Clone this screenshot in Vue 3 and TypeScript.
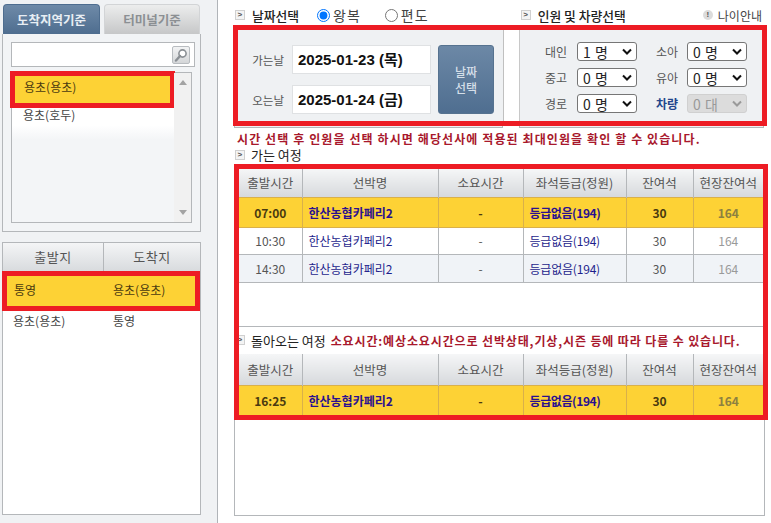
<script setup lang="ts">
interface Row { time: string; name: string; dur: string; grade: string; seat: string; site: string; sel?: boolean }
const columns = ['출발시간', '선박명', '소요시간', '좌석등급(정원)', '잔여석', '현장잔여석']
const outbound: Row[] = [
  { time: '07:00', name: '한산농협카페리2', dur: '-', grade: '등급없음(194)', seat: '30', site: '164', sel: true },
  { time: '10:30', name: '한산농협카페리2', dur: '-', grade: '등급없음(194)', seat: '30', site: '164' },
  { time: '14:30', name: '한산농협카페리2', dur: '-', grade: '등급없음(194)', seat: '30', site: '164' },
]
const inbound: Row[] = [
  { time: '16:25', name: '한산농협카페리2', dur: '-', grade: '등급없음(194)', seat: '30', site: '164', sel: true },
]
const tables = { outbound, inbound }
const counts = ['0 명', '1 명', '2 명', '3 명']
</script>

<template>
  <div class="page">
    <aside class="side">
      <div class="tabs">
        <div class="tab on">도착지역기준</div>
        <div class="tab">터미널기준</div>
      </div>
      <div class="panel">
        <div class="search">
          <span class="sbtn">
            <svg width="14" height="14" viewBox="0 0 14 14"><circle cx="8.5" cy="5.5" r="3.6" fill="#fff" stroke="#8a8f94" stroke-width="1.6"/><path d="M6 8 2 12.5" stroke="#8a8f94" stroke-width="2.4" stroke-linecap="round"/></svg>
          </span>
        </div>
        <div class="list">
          <div class="items">
            <div class="item sel">용초(용초)</div>
            <div class="item">용초(호두)</div>
          </div>
          <div class="track"><i class="up"></i><i class="down"></i></div>
        </div>
      </div>
      <div class="routes">
        <div class="rhead"><span>출발지</span><span>도착지</span></div>
        <div class="rrow rsel"><span>통영</span><span>용초(용초)</span></div>
        <div class="rrow"><span>용초(용초)</span><span>통영</span></div>
      </div>
    </aside>

    <main class="main">
      <div class="top">
        <span class="ico">&gt;</span><b class="ttl">날짜선택</b>
        <label class="rad r1"><input type="radio" name="trip" checked />왕복</label>
        <label class="rad r2"><input type="radio" name="trip" />편도</label>
        <span class="ico i2">&gt;</span><b class="ttl">인원 및 차량선택</b>
        <span class="age"><i>!</i>나이안내</span>
      </div>

      <div class="hl form">
        <div class="dates">
          <div class="dcol">
            <div class="dline"><label>가는날</label><div class="dbox">2025-01-23 (목)</div></div>
            <div class="dline"><label>오는날</label><div class="dbox">2025-01-24 (금)</div></div>
          </div>
          <button class="pick">날짜<br />선택</button>
        </div>
        <div class="people">
          <label>대인</label><select><option v-for="c in counts" :key="c" :selected="c === '1 명'">{{ c }}</option></select>
          <label>소아</label><select><option v-for="c in counts" :key="c">{{ c }}</option></select>
          <label>중고</label><select><option v-for="c in counts" :key="c">{{ c }}</option></select>
          <label>유아</label><select><option v-for="c in counts" :key="c">{{ c }}</option></select>
          <label>경로</label><select><option v-for="c in counts" :key="c">{{ c }}</option></select>
          <label class="car">차량</label><select disabled><option>0 대</option></select>
        </div>
      </div>
      <div class="under"><span></span><span></span></div>

      <p class="msg">시간 선택 후 인원을 선택 하시면 해당선사에 적용된 최대인원을 확인 할 수 있습니다.</p>
      <div class="sub go"><span class="ico">&gt;</span><span>가는 여정</span></div>

      <div class="hl trips">
        <table>
          <colgroup><col class="c1" /><col class="c2" /><col class="c3" /><col class="c4" /><col class="c5" /><col class="c6" /></colgroup>
          <thead><tr><th v-for="c in columns" :key="c">{{ c }}</th></tr></thead>
          <tbody>
            <tr v-for="r in tables.outbound" :key="r.time" :class="{ sel: r.sel }">
              <td>{{ r.time }}</td><td class="nm">{{ r.name }}</td><td>{{ r.dur }}</td><td class="nm gr">{{ r.grade }}</td><td>{{ r.seat }}</td><td class="site">{{ r.site }}</td>
            </tr>
          </tbody>
        </table>
        <div class="blank"></div>
        <div class="sub back"><span class="ico">&gt;</span><span>돌아오는 여정</span><b>소요시간:예상소요시간으로 선박상태,기상,시즌 등에 따라 다를 수 있습니다.</b></div>
        <table class="t2">
          <colgroup><col class="c1" /><col class="c2" /><col class="c3" /><col class="c4" /><col class="c5" /><col class="c6" /></colgroup>
          <thead><tr><th v-for="c in columns" :key="c">{{ c }}</th></tr></thead>
          <tbody>
            <tr v-for="r in tables.inbound" :key="r.time" :class="{ sel: r.sel }">
              <td>{{ r.time }}</td><td class="nm">{{ r.name }}</td><td>{{ r.dur }}</td><td class="nm gr">{{ r.grade }}</td><td>{{ r.seat }}</td><td class="site">{{ r.site }}</td>
            </tr>
          </tbody>
        </table>
      </div>
      <div class="rest"></div>
    </main>
  </div>
</template>

<style>
html, body { margin: 0; background: #fff; }
</style>

<style scoped>
.page {
  display: flex;
  width: 771px;
  height: 523px;
  overflow: hidden;
  font-family: "Noto Sans CJK KR", "Liberation Sans", sans-serif;
  font-size: 12px;
  color: #333;
}
.side {
  width: 218px;
  box-sizing: border-box;
  flex: none;
  padding: 4px 16px 0 2px;
  background: #f0f2f4;
  border-right: 1px solid #b0b4b8;
}
.tabs { display: flex; gap: 4px; padding-left: 1px; height: 30px; }
.tab {
  width: 96px;
  box-sizing: border-box;
  border: 1px solid #d2d4d6;
  border-bottom: 0;
  border-radius: 4px 4px 0 0;
  background: linear-gradient(#eceded, #c6c7c8);
  color: #8b8f93;
  font-size: 12.5px;
  font-weight: 700;
  line-height: 29px;
  text-align: center;
}
.tab.on {
  width: 97px;
  background: linear-gradient(#6e8aa8, #4e6d8f);
  border-color: #4e6d8f;
  color: #e8eef4;
}
.panel {
  height: 198px;
  box-sizing: border-box;
  border: 1px solid #b4b7ba;
  border-top: 0;
  background: #f2f4f6;
  padding: 8px 8px 0;
}
.search {
  height: 25px;
  width: 184px;
  box-sizing: border-box;
  border: 1px solid #b4b7ba;
  background: #fff;
  display: flex;
  justify-content: flex-end;
  align-items: center;
  padding-right: 4px;
}
.sbtn {
  width: 18px;
  height: 18px;
  box-sizing: border-box;
  border: 1px solid #b8bcc0;
  border-radius: 2px;
  background: linear-gradient(#f2f3f4, #d4d6d8);
  display: flex;
  align-items: center;
  justify-content: center;
}
.list {
  margin-top: 5px;
  height: 151px;
  width: 181px;
  box-sizing: border-box;
  border: 1px solid #b4b7ba;
  display: flex;
  background: #fff;
}
.items {
  flex: 1;
  background: linear-gradient(#fff 0, #fff 35%, #f3f5f7 45%, #f3f5f7 100%);
  position: relative;
}
.item { padding-left: 11px; height: 20px; line-height: 14px; color: #444; }
.item.sel {
  box-sizing: border-box;
  margin: -2px -1px 0 -2px;
  height: 37px;
  border: 5px solid #ed1c24;
  background: #fdd235;
  line-height: 21px;
  padding-left: 9px;
  color: #4a3a10;
}
.track {
  width: 17px;
  flex: none;
  background: #f1f1f1;
  position: relative;
}
.up, .down {
  position: absolute;
  left: 5px;
  width: 0;
  height: 0;
  border-left: 4px solid transparent;
  border-right: 4px solid transparent;
}
.up { top: 7px; border-bottom: 5px solid #a3a3a3; }
.down { bottom: 7px; border-top: 5px solid #a3a3a3; }
.routes {
  margin-top: 10px;
  height: 273px;
  box-sizing: border-box;
  border: 1px solid #b4b7ba;
  border-top: 0;
  background: #fff;
}
.rhead {
  display: grid;
  grid-template-columns: 100px 1fr;
  height: 29px;
  line-height: 28px;
  text-align: center;
  font-size: 13px;
  letter-spacing: 0.6px;
  color: #555;
  border-top: 1px solid #b4b7ba;
  box-sizing: border-box;
  background: linear-gradient(#f4f5f6, #d8dbde);
}
.rhead span + span { border-left: 1px solid #b4b7ba; }
.rrow {
  display: grid;
  grid-template-columns: 100px 1fr;
  height: 20px;
  line-height: 20px;
  padding-left: 10px;
  color: #444;
}
.rrow.rsel {
  margin: 0 0 0 -1px;
  height: 40px;
  box-sizing: border-box;
  border: 5px solid #ed1c24;
  background: #fdd235;
  color: #4a3a10;
  padding-left: 7px;
  grid-template-columns: 99px 1fr;
  line-height: 27px;
}
.main { flex: 1; min-width: 0; padding-left: 15px; background: #fff; }
.top {
  display: flex;
  align-items: center;
  height: 20px;
  margin-top: 5px;
}
.ico {
  flex: none;
  width: 10px;
  height: 10px;
  box-sizing: border-box;
  margin-left: 2px;
  border: 1px solid #d0d0d0;
  background: #f4f4f4;
  color: #555;
  font: 700 8px/8px "Liberation Mono", monospace;
  text-align: center;
}
.ttl { margin-left: 7px; font-size: 12.8px; font-weight: 500; color: #222; }
.rad { display: flex; align-items: center; font-size: 14px; color: #444; letter-spacing: 1px; }
.rad input { margin: 0 3px 0 0; width: 13px; height: 13px; }
.r1 { margin-left: 18px; }
.r2 { margin-left: 24px; }
.i2 { margin-left: 92px; }
.age { margin-left: auto; margin-right: 9px; display: flex; align-items: center; color: #444; }
.age i {
  width: 10px;
  height: 10px;
  margin-right: 5px;
  border-radius: 50%;
  background: #dcdcdc;
  font: 700 8px/10px "Liberation Sans", sans-serif;
  text-align: center;
  color: #555;
}
.hl { box-sizing: border-box; border: 5px solid #ed1c24; overflow: hidden; }
.form { display: flex; width: 534px; height: 101px; background: #fff; }
.under { display: flex; height: 2px; width: 530px; margin-left: 1px; }
.under span {
  width: 269px;
  box-sizing: border-box;
  border: 1px solid #b4b7ba;
  border-top: 0;
  background: #eff1f3;
}
.under span + span { width: 245px; margin-left: 16px; }
.dates {
  width: 266px;
  box-sizing: border-box;
  display: flex;
  background: #eff1f3;
  border-right: 1px solid #c0c0c0;
  padding-top: 15px;
}
.dcol { display: flex; flex-direction: column; gap: 11px; }
.dline { display: flex; align-items: center; height: 29px; }
.dline label { width: 54px; box-sizing: border-box; padding-right: 8px; text-align: right; color: #555; font-size: 11.5px; }
.dbox {
  width: 139px;
  height: 29px;
  box-sizing: border-box;
  border: 1px solid #dfe1e3;
  background: #fff;
  padding-left: 5px;
  font: 700 15px/27px "Liberation Sans", "Noto Sans CJK KR", sans-serif;
  color: #111;
}
.pick {
  margin-left: 7px;
  width: 56px;
  height: 69px;
  padding: 0;
  border: 1px solid #56728f;
  border-radius: 3px;
  background: linear-gradient(#6c88a6, #4f6e90);
  color: #d5dfe9;
  font: 500 12px/16px "Noto Sans CJK KR", sans-serif;
}
.people {
  margin-left: 15px;
  width: 243px;
  box-sizing: border-box;
  background: #eff1f3;
  border-left: 1px solid #c8c8c8;
  padding: 12px 0 0 20px;
  display: grid;
  grid-template-columns: 37px 60px 50px 60px;
  grid-auto-rows: 19px;
  row-gap: 7px;
  align-items: center;
}
.people label { color: #555; text-align: right; padding-right: 10px; }
.people label:nth-child(4n+3) { padding-right: 9px; }
.people label.car { color: #23468c; font-weight: 700; }
.people select {
  appearance: none;
  width: 60px;
  height: 19px;
  box-sizing: border-box;
  padding: 0 0 0 5px;
  font: 14px/16px "Noto Sans CJK KR", sans-serif;
  letter-spacing: 0.5px;
  color: #222;
  border: 1px solid #767676;
  border-radius: 3px;
  background: #fff url("data:image/svg+xml,%3Csvg xmlns='http://www.w3.org/2000/svg' width='10' height='7'%3E%3Cpath d='M1 1.5 5 5.5 9 1.5' fill='none' stroke='%23111' stroke-width='2'/%3E%3C/svg%3E") no-repeat right 4px center;
}
.people select:disabled {
  color: #999;
  border-color: #d0d0d0;
  opacity: 1;
  background: #dcdcdc url("data:image/svg+xml,%3Csvg xmlns='http://www.w3.org/2000/svg' width='10' height='7'%3E%3Cpath d='M1 1.5 5 5.5 9 1.5' fill='none' stroke='%23999' stroke-width='2'/%3E%3C/svg%3E") no-repeat right 4px center;
}
.msg {
  margin: 3px 0 0 4px;
  height: 16px;
  line-height: 16px;
  color: #a8182c;
  font-weight: 700;
  font-size: 12px;
  letter-spacing: 1.1px;
  white-space: nowrap;
}
.sub { display: flex; align-items: center; height: 16px; font-size: 13px; line-height: 15px; color: #222; }
.sub.go { height: 15px; margin-bottom: 2px; }
.sub .ico { margin-right: 6px; margin-left: 2px; }
.trips { width: 534px; margin-left: 1px; height: 256px; }
table { width: 524px; border-collapse: collapse; table-layout: fixed; }
.c1 { width: 63px; }
.c2 { width: 136px; }
.c3 { width: 85px; }
.c4 { width: 103px; }
.c5 { width: 67px; }
.c6 { width: 70px; }
th {
  height: 28px;
  padding: 0;
  box-sizing: border-box;
  background: linear-gradient(#f5f6f7, #d6d9dc);
  border-right: 1px solid #b4b7ba;
  font-weight: 400;
  font-size: 12.5px;
  color: #555;
}
th:last-child, td:last-child { border-right: 0; }
td {
  height: 26px;
  padding: 0;
  text-align: center;
  border-right: 1px solid #b4b7ba;
  border-bottom: 1px solid #b4b7ba;
  color: #555;
  font-size: 12px;
  white-space: nowrap;
}
td.nm { text-align: left; padding-left: 6px; color: #1e1e8c; }
td.gr { letter-spacing: -0.2px; }
td.site { color: #999; }
tbody tr:nth-child(3) td { background: #f0f3f7; height: 27px; }
tr.sel td {
  height: 29px;
  background: #fdd235;
  border-top: 1px solid #d9b04a;
  border-bottom: 1px solid #d9b04a;
  border-right-color: #d9b04a;
  font-weight: 700;
  color: #4a3a10;
}
tr.sel td.nm { color: #2a1090; }
tr.sel td.gr { letter-spacing: -0.4px; }
tr.sel td.site { color: #8d8040; }
.t2 th { height: 32px; }
.t2 tr.sel td { border-bottom: 0; }
.blank { height: 44px; border-bottom: 1px solid #b4b7ba; box-sizing: border-box; }
.back { height: 27px; }
.back .ico { margin-left: -4px; }
.back b { margin-left: 5px; color: #a8182c; font-size: 12px; letter-spacing: 0.87px; white-space: nowrap; }
.rest {
  width: 531px;
  height: 96px;
  margin-left: 1px;
  box-sizing: border-box;
  border: 1px solid #b4b7ba;
  border-top: 0;
}
</style>
